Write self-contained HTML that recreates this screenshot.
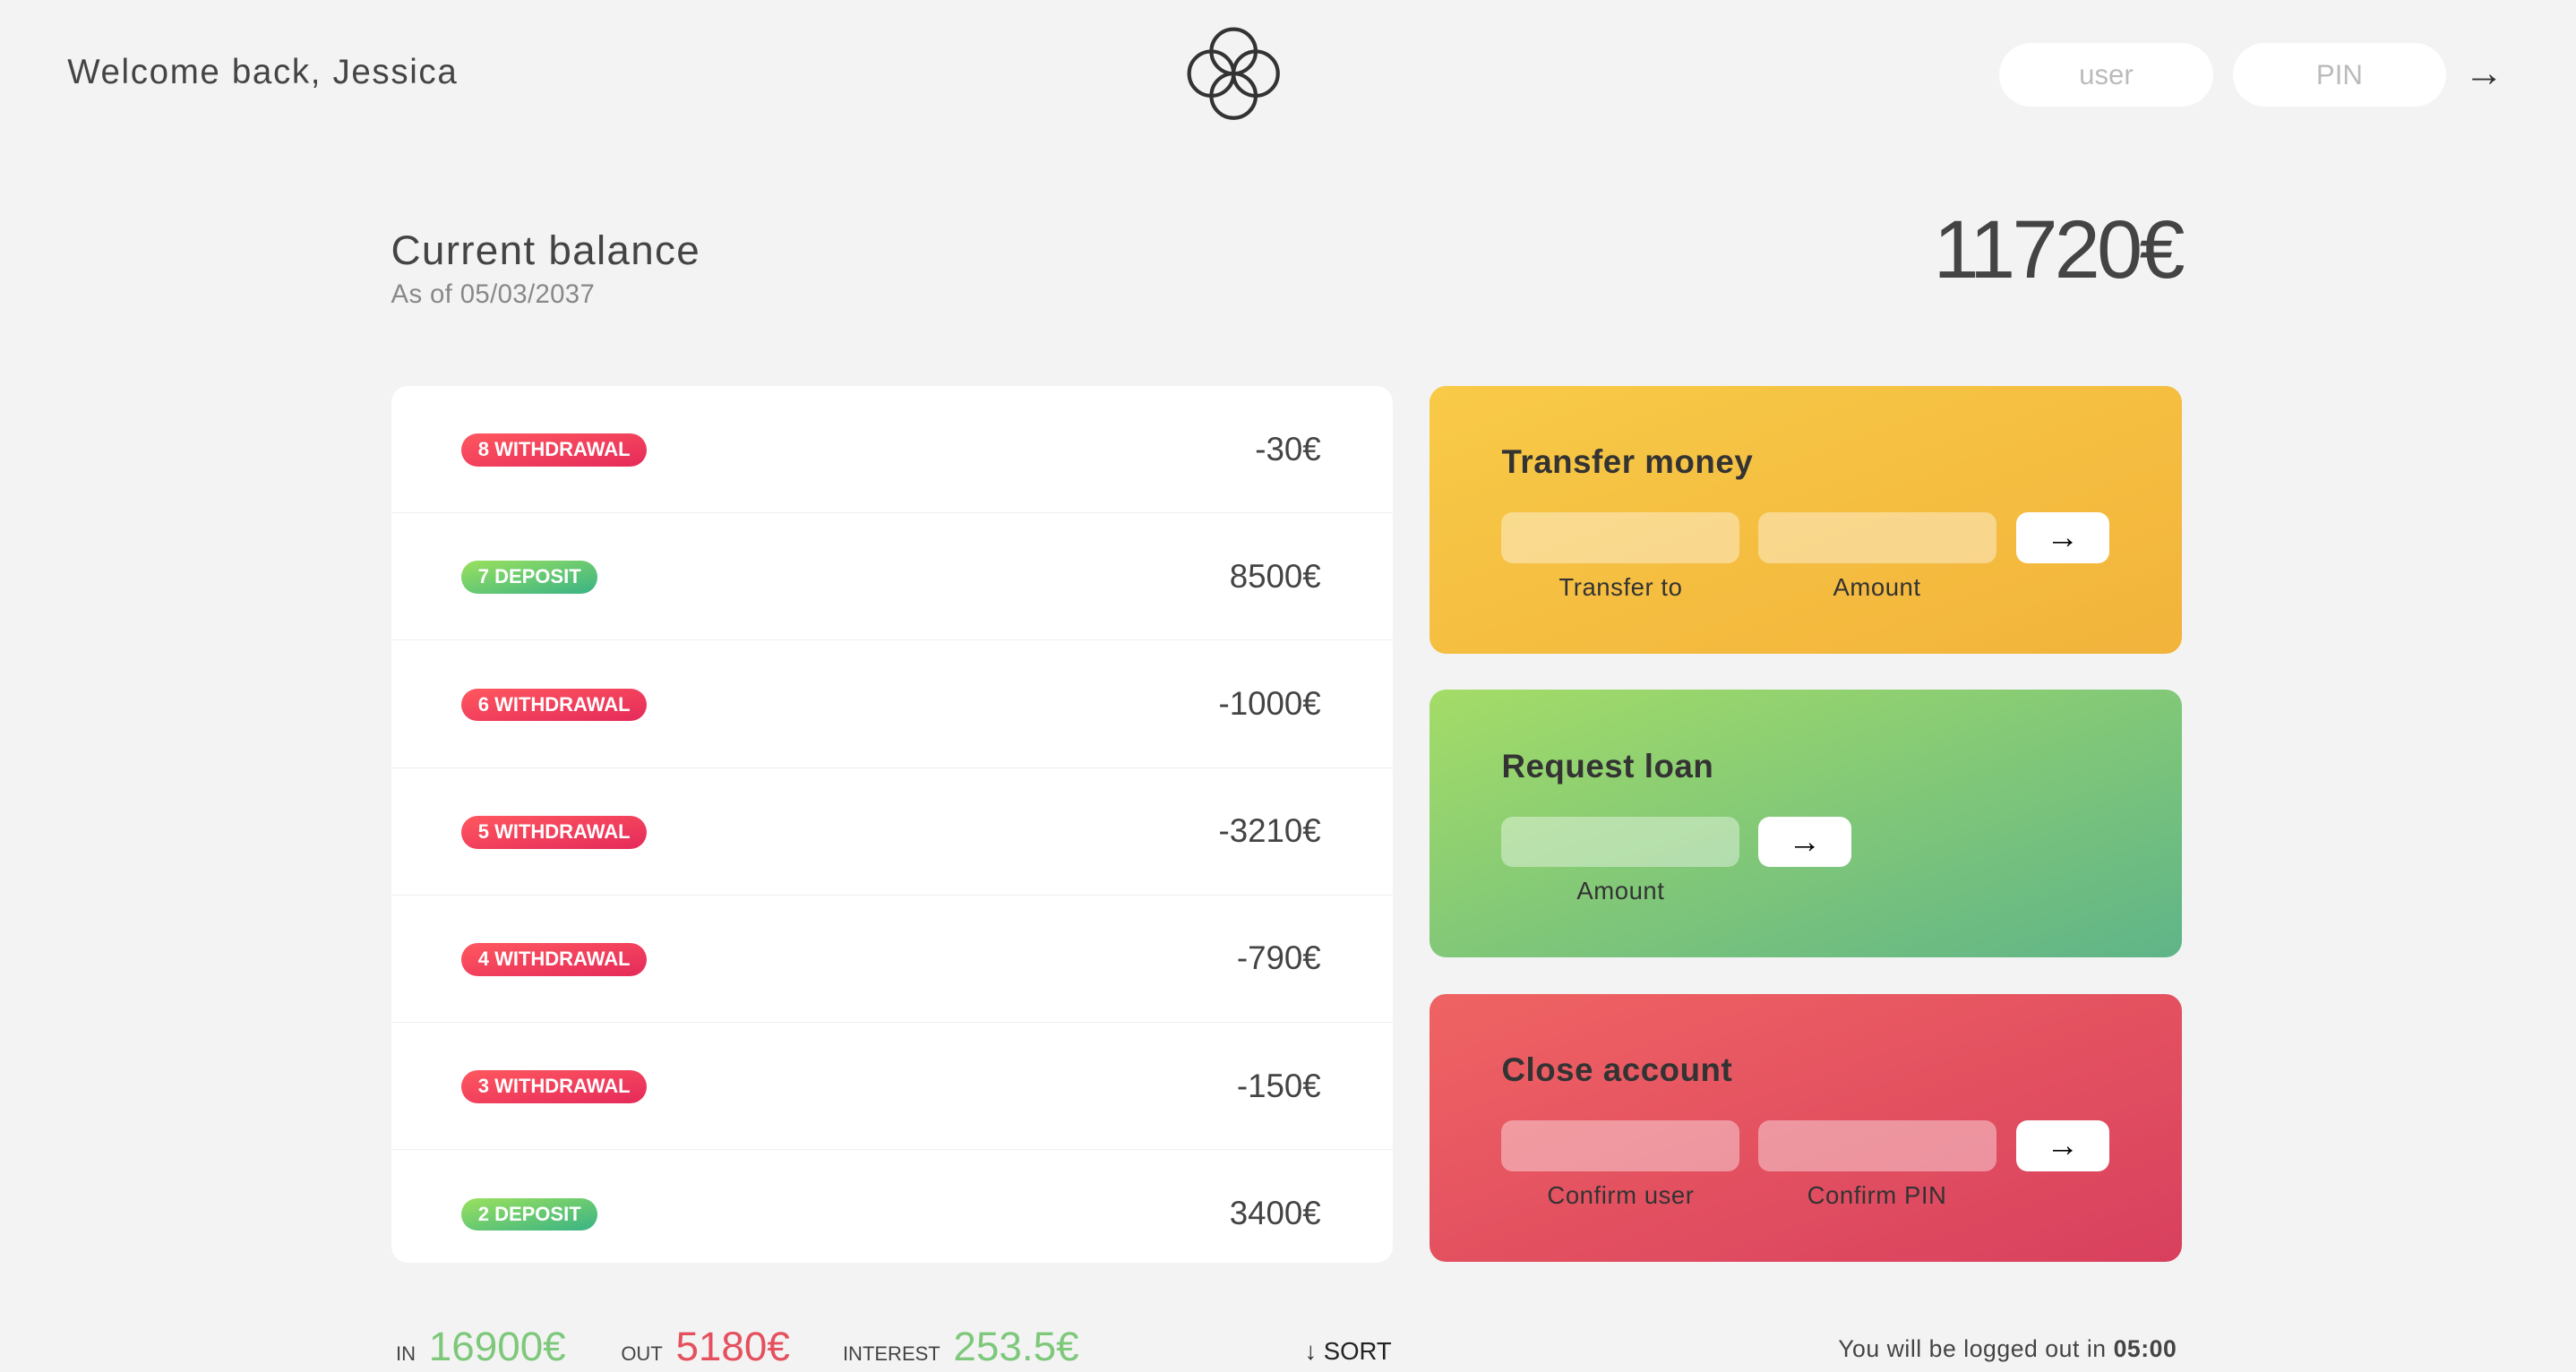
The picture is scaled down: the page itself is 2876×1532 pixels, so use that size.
<!DOCTYPE html>
<html><head><meta charset="utf-8">
<style>
html{zoom:1.8342}
body{margin:0;width:1568px;height:835px;background:#f3f3f3;font-family:"Liberation Sans",sans-serif;color:#444;position:relative;overflow:hidden}
.abs{position:absolute}
.welcome{left:41px;top:32px;font-size:21px;color:#444;letter-spacing:0.9px}
.pill{top:26px;width:130px;height:39px;background:#fff;border-radius:20px;color:#bbb;font-size:17px;text-align:center;line-height:39px}
.bal{left:238px;top:138px;font-size:25px;color:#444;letter-spacing:0.7px}
.asof{left:238px;top:170px;font-size:16px;color:#888;letter-spacing:0.2px}
.big{right:240px;top:124px;font-size:50px;color:#444;letter-spacing:-2px}
.mov{left:238px;top:235px;width:610px;height:534px;background:#fff;border-radius:10px;overflow:hidden}
.row{height:77px;border-bottom:1px solid #eee;position:relative}
.badge{position:absolute;left:43px;top:29px;height:20px;line-height:20px;padding:0 10px;border-radius:10px;color:#fff;font-size:12px;font-weight:bold}
.w{background:linear-gradient(to top left,#e52a5a,#ff585f)}
.d{background:linear-gradient(to top left,#39b385,#9be15d)}
.val{position:absolute;right:44px;top:27px;font-size:20px;color:#444}
.card{left:870px;width:458px;height:163px;border-radius:10px}
.card h3{position:absolute;left:44px;top:35px;margin:0;font-size:20px;color:#333;letter-spacing:0.3px}
.in{position:absolute;top:77px;width:145px;height:31px;border-radius:7px;background:rgba(255,255,255,.4)}
.btn{position:absolute;top:77px;width:57px;height:31px;border-radius:7px;background:#fff;text-align:center;line-height:30px;font-size:20px;color:#000}
.lab{position:absolute;top:114px;width:145px;text-align:center;font-size:15px;color:#333;letter-spacing:0.3px}
.sum{top:805px;font-size:25px}
.sm{font-size:12px;color:#444;text-transform:uppercase;margin-right:8px}
</style></head><body>
<div class="abs welcome">Welcome back, Jessica</div>
<svg class="abs" style="left:722px;top:16px" width="58" height="58" viewBox="0 0 58 58" fill="none" stroke="#333" stroke-width="2.3">
<circle cx="29" cy="15.5" r="13.5"/><circle cx="29" cy="42.5" r="13.5"/><circle cx="15.5" cy="29" r="13.5"/><circle cx="42.5" cy="29" r="13.5"/></svg>
<div class="abs pill" style="left:1217px">user</div>
<div class="abs pill" style="left:1359px">PIN</div>
<div class="abs" style="left:1500px;top:31px;font-size:24px;color:#333">→</div>
<div class="abs bal">Current balance</div>
<div class="abs asof">As of 05/03/2037</div>
<div class="abs big">11720€</div>
<div class="abs mov">
<div class="row"><span class="badge w">8 WITHDRAWAL</span><span class="val">-30€</span></div>
<div class="row"><span class="badge d">7 DEPOSIT</span><span class="val">8500€</span></div>
<div class="row"><span class="badge w">6 WITHDRAWAL</span><span class="val">-1000€</span></div>
<div class="row"><span class="badge w">5 WITHDRAWAL</span><span class="val">-3210€</span></div>
<div class="row"><span class="badge w">4 WITHDRAWAL</span><span class="val">-790€</span></div>
<div class="row"><span class="badge w">3 WITHDRAWAL</span><span class="val">-150€</span></div>
<div class="row" style="border:0"><span class="badge d">2 DEPOSIT</span><span class="val">3400€</span></div>
</div>
<div class="abs card" style="top:235px;background:linear-gradient(to bottom right,#f8ca47,#f2b33b)">
<h3>Transfer money</h3><div class="in" style="left:44px"></div><div class="in" style="left:200px"></div><div class="btn" style="left:357px">→</div>
<div class="lab" style="left:44px">Transfer to</div><div class="lab" style="left:200px">Amount</div></div>
<div class="abs card" style="top:420px;background:linear-gradient(to bottom right,#a4dc67,#5fb488)">
<h3>Request loan</h3><div class="in" style="left:44px"></div><div class="btn" style="left:200px">→</div>
<div class="lab" style="left:44px">Amount</div></div>
<div class="abs card" style="top:605px;background:linear-gradient(to bottom right,#ef6363,#d8405e)">
<h3>Close account</h3><div class="in" style="left:44px"></div><div class="in" style="left:200px"></div><div class="btn" style="left:357px">→</div>
<div class="lab" style="left:44px">Confirm user</div><div class="lab" style="left:200px">Confirm PIN</div></div>
<div class="abs sum" style="left:241px"><span class="sm">In</span><span style="color:#7ec87b">16900€</span></div>
<div class="abs sum" style="left:378px"><span class="sm">Out</span><span style="color:#e5505e">5180€</span></div>
<div class="abs sum" style="left:513px"><span class="sm">Interest</span><span style="color:#7ec87b">253.5€</span></div>
<div class="abs" style="left:794px;top:814px;font-size:15px;color:#222">↓ SORT</div>
<div class="abs" style="right:243px;top:813px;font-size:14.5px;color:#444;letter-spacing:0.3px">You will be logged out in <b>05:00</b></div>
</body></html>
